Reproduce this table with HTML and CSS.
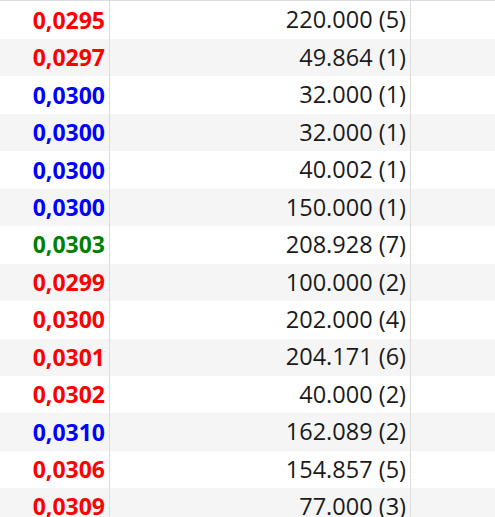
FILE: index.html
```html
<!DOCTYPE html>
<html>
<head>
<meta charset="utf-8">
<link rel="stylesheet" href="styles.css">
</head>
<body>
<div class="grid">
  <div class="row"><div class="price red">0,0295</div><div class="qty">220.000 (5)</div><div class="extra"></div></div>
  <div class="row alt"><div class="price red">0,0297</div><div class="qty">49.864 (1)</div><div class="extra"></div></div>
  <div class="row"><div class="price blue">0,0300</div><div class="qty">32.000 (1)</div><div class="extra"></div></div>
  <div class="row alt"><div class="price blue">0,0300</div><div class="qty">32.000 (1)</div><div class="extra"></div></div>
  <div class="row"><div class="price blue">0,0300</div><div class="qty">40.002 (1)</div><div class="extra"></div></div>
  <div class="row alt"><div class="price blue">0,0300</div><div class="qty">150.000 (1)</div><div class="extra"></div></div>
  <div class="row"><div class="price green">0,0303</div><div class="qty">208.928 (7)</div><div class="extra"></div></div>
  <div class="row alt"><div class="price red">0,0299</div><div class="qty">100.000 (2)</div><div class="extra"></div></div>
  <div class="row"><div class="price red">0,0300</div><div class="qty">202.000 (4)</div><div class="extra"></div></div>
  <div class="row alt"><div class="price red">0,0301</div><div class="qty">204.171 (6)</div><div class="extra"></div></div>
  <div class="row"><div class="price red">0,0302</div><div class="qty">40.000 (2)</div><div class="extra"></div></div>
  <div class="row alt"><div class="price blue">0,0310</div><div class="qty">162.089 (2)</div><div class="extra"></div></div>
  <div class="row"><div class="price red">0,0306</div><div class="qty">154.857 (5)</div><div class="extra"></div></div>
  <div class="row alt"><div class="price red">0,0309</div><div class="qty">77.000 (3)</div><div class="extra"></div></div>
</div>
</body>
</html>
```
FILE: styles.css
```css
html, body {
  margin: 0;
  padding: 0;
  background: #ffffff;
  overflow: hidden;
}
body {
  font-family: "Open Sans", "Noto Sans", sans-serif;
  font-size: 23px;
}
.grid {
  border-top: 1px solid #dcdcdc;
  display: flex;
  flex-direction: column;
}
.row {
  display: grid;
  grid-template-columns: 110px 301px 1fr;
  height: 37.45px;
  background: #ffffff;
}
.row:first-child {
  height: 38px;
}
.row.alt {
  background: #f5f5f5;
}
.price,
.qty {
  display: flex;
  align-items: center;
  justify-content: flex-end;
  padding-right: 4px;
  border-right: 1px solid #dcdcdc;
  box-sizing: border-box;
  line-height: 1;
}
.price {
  font-weight: 700;
}
.qty {
  color: #1a1a1a;
  font-size: 23.5px;
}
.red { color: #ff0000; }
.blue { color: #0000ff; }
.green { color: #008000; }
```
